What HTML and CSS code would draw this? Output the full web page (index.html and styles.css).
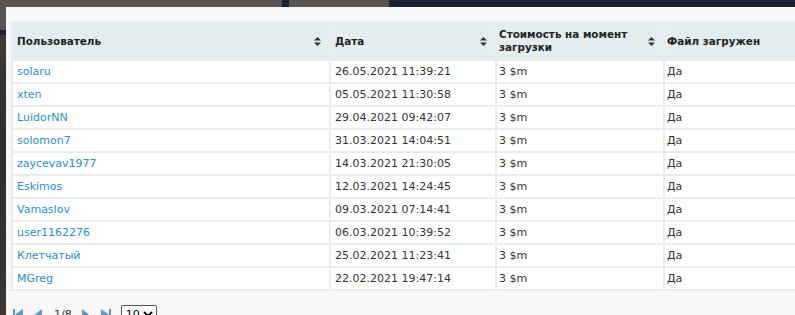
FILE: index.html
```html
<!DOCTYPE html>
<html lang="ru">
<head>
<meta charset="utf-8">
<title>Загрузки</title>
<link rel="stylesheet" href="styles.css">
</head>
<body>
<div class="backdrop">
  <div class="bd-navy bd-a"></div>
  <div class="bd-navy bd-b"></div>
  <div class="bd-navy bd-c"></div>
  <div class="bd-photo"></div>
</div>
<div class="dialog">
  <table class="grid">
    <colgroup>
      <col class="c1"><col class="c2"><col class="c3"><col class="c4">
    </colgroup>
    <thead>
      <tr>
        <th><div class="th-in"><span>Пользователь</span><svg class="sort" viewBox="0 0 7 9"><path d="M3.5 0L7 3.5H0Z M3.5 9L7 5.5H0Z"/></svg></div></th>
        <th><div class="th-in"><span>Дата</span><svg class="sort" viewBox="0 0 7 9"><path d="M3.5 0L7 3.5H0Z M3.5 9L7 5.5H0Z"/></svg></div></th>
        <th><div class="th-in"><span>Стоимость на момент загрузки</span><svg class="sort" viewBox="0 0 7 9"><path d="M3.5 0L7 3.5H0Z M3.5 9L7 5.5H0Z"/></svg></div></th>
        <th><div class="th-in"><span>Файл загружен</span></div></th>
      </tr>
    </thead>
    <tbody>
      <tr><td><a href="#">solaru</a></td><td>26.05.2021 11:39:21</td><td>3 $m</td><td>Да</td></tr>
      <tr><td><a href="#">xten</a></td><td>05.05.2021 11:30:58</td><td>3 $m</td><td>Да</td></tr>
      <tr><td><a href="#">LuidorNN</a></td><td>29.04.2021 09:42:07</td><td>3 $m</td><td>Да</td></tr>
      <tr><td><a href="#">solomon7</a></td><td>31.03.2021 14:04:51</td><td>3 $m</td><td>Да</td></tr>
      <tr><td><a href="#">zaycevav1977</a></td><td>14.03.2021 21:30:05</td><td>3 $m</td><td>Да</td></tr>
      <tr><td><a href="#">Eskimos</a></td><td>12.03.2021 14:24:45</td><td>3 $m</td><td>Да</td></tr>
      <tr><td><a href="#">Vamaslov</a></td><td>09.03.2021 07:14:41</td><td>3 $m</td><td>Да</td></tr>
      <tr><td><a href="#">user1162276</a></td><td>06.03.2021 10:39:52</td><td>3 $m</td><td>Да</td></tr>
      <tr><td><a href="#">Клетчатый</a></td><td>25.02.2021 11:23:41</td><td>3 $m</td><td>Да</td></tr>
      <tr><td><a href="#">MGreg</a></td><td>22.02.2021 19:47:14</td><td>3 $m</td><td>Да</td></tr>
    </tbody>
  </table>
  <div class="pager">
    <svg class="pg" viewBox="0 0 10 11"><rect x="0" y="0" width="2" height="11"/><path d="M2 5.5L10 0V11Z"/></svg>
    <svg class="pg pg-s" viewBox="0 0 7 11"><path d="M0 5.5L7 0V11Z"/></svg>
    <span class="pg-num">1/8</span>
    <svg class="pg pg-s" viewBox="0 0 7 11"><path d="M7 5.5L0 0V11Z"/></svg>
    <svg class="pg" viewBox="0 0 10 11"><path d="M8 5.5L0 0V11Z"/><rect x="8" y="0" width="2" height="11"/></svg>
    <select class="pg-size"><option>10</option><option>20</option></select>
  </div>
</div>
</body>
</html>
```
FILE: styles.css
```css
html, body {
  margin: 0;
  padding: 0;
}
body {
  background: #575451;
  width: 795px;
  height: 315px;
  overflow: hidden;
  position: relative;
  font-family: "DejaVu Sans", Verdana, sans-serif;
  font-size: 11px;
  color: #333;
  padding: 7px 0 0 6px;
  box-sizing: border-box;
}
.backdrop {
  position: absolute;
  inset: 0;
}
.bd-navy {
  position: absolute;
  background: #1d2134;
}
.bd-a { left: 282px; top: 0; width: 7px; height: 8px; }
.bd-b { left: 389px; top: 0; width: 406px; height: 8px; }
.bd-c { left: 0; top: 30px; width: 6px; height: 5px; }
.bd-photo {
  position: absolute;
  left: 0;
  top: 35px;
  width: 6px;
  height: 280px;
  background: linear-gradient(#3d3a38, #2e2b2a 40%, #3a3735);
}
.dialog {
  position: relative;
  background: #f7f7f7;
  width: 820px;
  height: 320px;
  padding: 14px 0 0 5px;
  box-sizing: border-box;
}
.grid {
  border-collapse: separate;
  border-spacing: 2px;
  background: #e6ecf0;
  table-layout: fixed;
  width: 880px;
}
.c1 { width: 316px; }
.c2 { width: 164px; }
.c3 { width: 166px; }
.c4 { width: 226px; }
.grid thead th {
  background: #e4eded;
  text-align: left;
  font-weight: bold;
  font-size: 10.4px;
  color: #222;
  padding: 0 3px 0 4px;
  height: 36px;
}
.grid thead th:nth-child(3),
.grid thead th:nth-child(4) { padding-left: 2px; }
.th-in {
  display: flex;
  align-items: center;
  justify-content: space-between;
  gap: 6px;
  line-height: 13px;
}
.sort {
  width: 7px;
  height: 9px;
  fill: #333;
  flex: none;
  margin-right: 5px;
}
.grid tbody td {
  background: #fff;
  height: 21px;
  padding: 0 4px;
  white-space: nowrap;
}
.grid tbody td:nth-child(3),
.grid tbody td:nth-child(4) { padding-left: 2px; }
.grid a {
  color: #2b8fcc;
  text-decoration: none;
}
.pager {
  display: flex;
  align-items: center;
  gap: 0;
  padding: 13px 0 0 2px;
  height: 20px;
}
.pg {
  width: 10px;
  height: 11px;
  fill: #5b9bd8;
  margin-right: 12px;
}
.pg-s { width: 7px; }
.pg-num {
  color: #333;
  font-size: 11px;
  margin-right: 10px;
}
.pg-size {
  font-family: "DejaVu Sans", sans-serif;
  font-size: 11px;
  height: 18px;
  border: 1px solid #555;
  border-radius: 2px;
  background: #fff;
  margin-left: -2px;
}
```
